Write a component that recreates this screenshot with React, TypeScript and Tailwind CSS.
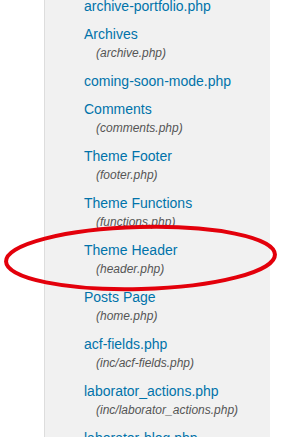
import React from "react";

const files: { title: string; file?: string }[] = [
  { title: "archive-portfolio.php" },
  { title: "Archives", file: "archive.php" },
  { title: "coming-soon-mode.php" },
  { title: "Comments", file: "comments.php" },
  { title: "Theme Footer", file: "footer.php" },
  { title: "Theme Functions", file: "functions.php" },
  { title: "Theme Header", file: "header.php" },
  { title: "Posts Page", file: "home.php" },
  { title: "acf-fields.php", file: "inc/acf-fields.php" },
  { title: "laborator_actions.php", file: "inc/laborator_actions.php" },
  { title: "laborator-blog.php" },
];

export default function App() {
  return (
    <div className="relative w-[281px] h-[437px] overflow-hidden bg-white flex font-['Liberation_Sans',Arial,sans-serif]">
      <div className="w-[44px] shrink-0" />
      <div className="w-[226px] shrink-0 border-l border-[#dddddd] bg-[#f1f1f1] pl-[39px]">
        <ul className="-mt-[3px]">
          {files.map((f) => (
            <li key={f.title} className="pb-[9px]">
              <a className="block text-[14px] leading-[19px] text-[#0073aa]">{f.title}</a>
              {f.file && (
                <span className="block pl-[12px] text-[12px] leading-[19px] italic text-[#555555]">
                  ({f.file})
                </span>
              )}
            </li>
          ))}
        </ul>
      </div>

      {/* red annotation circle */}
      <svg className="absolute left-0 top-0 pointer-events-none" width="281" height="437">
        <ellipse
          cx="140.5"
          cy="258"
          rx="134.5"
          ry="31"
          fill="none"
          stroke="#e3000b"
          strokeWidth="4"
          transform="rotate(-1.5 140.5 258)"
        />
      </svg>
    </div>
  );
}
